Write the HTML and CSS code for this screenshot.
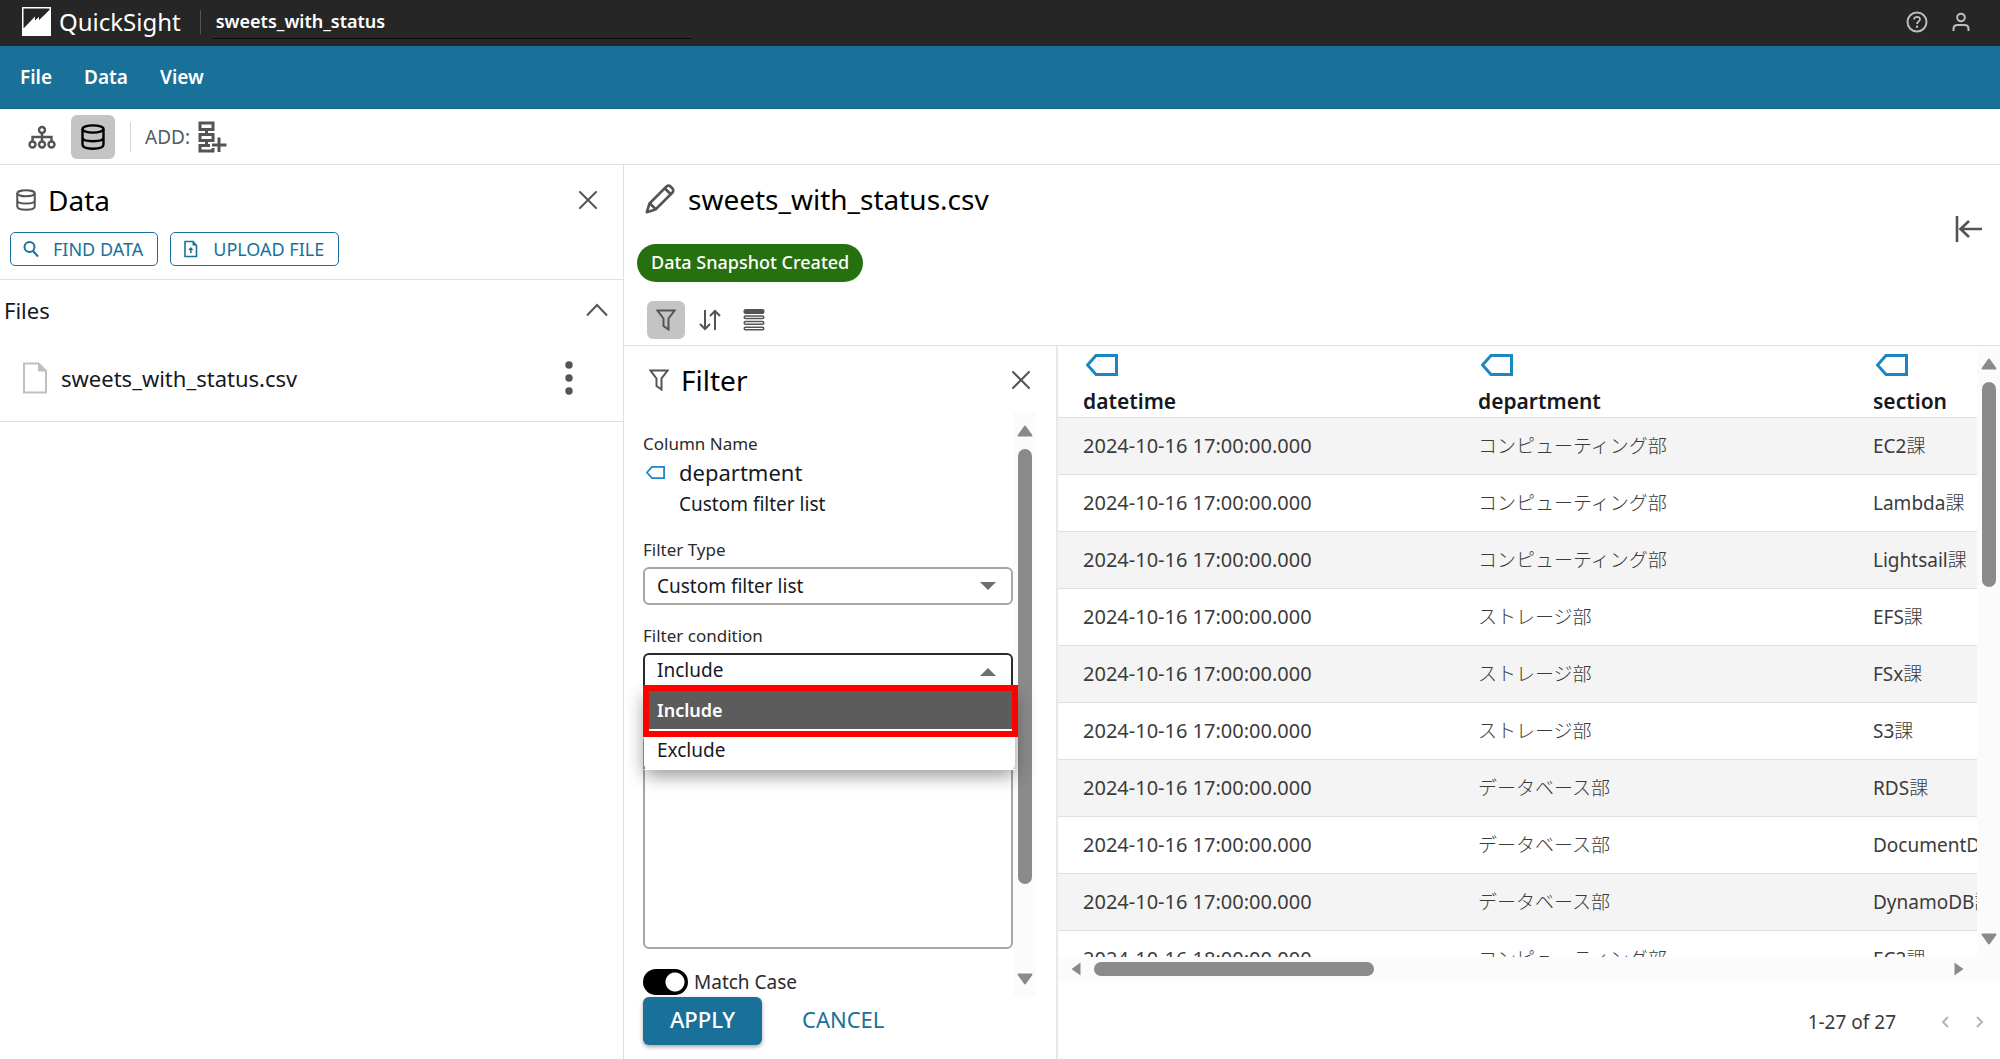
FILE: index.html
```html
<!DOCTYPE html>
<html lang="en">
<head>
<meta charset="utf-8">
<title>QuickSight - sweets_with_status</title>
<meta name="viewport" content="width=device-width, initial-scale=1">
<link rel="stylesheet" href="styles.css">
</head>
<body>
<svg class="sprite" aria-hidden="true">
  <symbol id="tag" viewBox="0 0 32 22"><path d="M10 1.5H30.5V20.5H10L1.5 11Z" fill="none" stroke="currentColor" stroke-width="3"/></symbol>
  <symbol id="close" viewBox="0 0 18 18"><path d="M1 1L17 17M17 1L1 17" fill="none" stroke="currentColor" stroke-width="2" stroke-linecap="round"/></symbol>
  <symbol id="funnel" viewBox="0 0 20 22"><path d="M1.5 1.5H18.5L12.5 9.5V20.5L7.5 17V9.5Z" fill="none" stroke="currentColor" stroke-width="2"/></symbol>
  <symbol id="database" viewBox="0 0 24 26"><g fill="none" stroke="currentColor" stroke-width="2.4"><ellipse cx="12" cy="5" rx="10.5" ry="3.600"/><path d="M1.500 5V20.500C1.500 23.500 6 24.700 12 24.700S22.500 23.500 22.500 20.500V5M1.500 13.500C1.500 16 6 17.200 12 17.200S22.500 16 22.500 13.500"/></g></symbol>
  <symbol id="arrow" viewBox="0 0 16 12"><path d="M8 1.500L14.500 10.500H1.500Z" fill="currentColor" stroke="currentColor" stroke-width="2" stroke-linejoin="round"/></symbol>
</svg>

<header class="topbar">
  <div class="brand">
    <svg width="29" height="29" viewBox="0 0 29 29" aria-hidden="true"><rect width="29" height="29" fill="#fff"/><path d="M1.500 1.500H27.500V3L17 14.500V10L1.500 23Z" fill="#262626"/><path d="M2 21L13 9.500V17L27.500 3V10L29 8V29H0V21Z" fill="#fff"/></svg>
    <span>QuickSight</span>
  </div>
  <input class="doc-name" type="text" aria-label="Name" value="sweets_with_status">
  <button class="bare" aria-label="Help"><svg width="22" height="22" viewBox="0 0 22 22"><circle cx="11" cy="11" r="9.500" fill="none" stroke="#bdbdbd" stroke-width="2"/><path d="M8 8.500C8 4.900 14.200 5 14 8.500C13.900 10.600 11 10.300 11 13" fill="none" stroke="#bdbdbd" stroke-width="1.800"/><circle cx="11" cy="15.800" r="1.200" fill="#bdbdbd"/></svg></button>
  <button class="bare" aria-label="Account"><svg width="18" height="20" viewBox="0 0 18 20"><g fill="none" stroke="#bdbdbd" stroke-width="2"><circle cx="9" cy="5.500" r="3.800"/><path d="M1.500 19V17C1.500 14 3 13 5.500 13H12.500C15 13 16.500 14 16.500 17V19"/></g></svg></button>
</header>

<nav class="menubar" aria-label="Main menu">
  <a href="#">File</a>
  <a href="#">Data</a>
  <a href="#">View</a>
</nav>

<div class="toolbar">
  <button class="tool" aria-label="Model"><svg width="28" height="24" viewBox="0 0 28 24"><g fill="none" stroke="#545454" stroke-width="2.400"><circle cx="14" cy="5" r="3"/><circle cx="4.500" cy="19.500" r="3"/><circle cx="14" cy="19.500" r="3"/><circle cx="23.500" cy="19.500" r="3"/><path d="M14 8V16.500M4.500 16.500V12H23.500V16.500"/></g></svg></button>
  <button class="tool tool-on" aria-label="Data"><svg width="24" height="26"><use href="#database"/></svg></button>
  <div class="add">
    <span>ADD:</span>
    <button class="bare" aria-label="Add step"><svg width="29" height="32" viewBox="0 0 29 32"><g fill="none" stroke="#545454" stroke-width="3"><path d="M2 2H15V8.500H2ZM2 13.500H15V19.500H2ZM8.500 8.500V13.500M8.500 19.500V24.500M12 24.500H2V30H15V27"/><path d="M21 16.500V31M14 24H28.500"/></g></svg></button>
  </div>
</div>

<main class="workspace">
  <aside class="side">
    <div class="side-head">
      <svg class="ink" width="20" height="22"><use href="#database"/></svg>
      <h2>Data</h2>
      <button class="bare ink" aria-label="Close data panel"><svg width="18" height="18"><use href="#close"/></svg></button>
    </div>
    <div class="side-actions">
      <button class="outline"><svg width="16" height="18" viewBox="0 0 16 18"><g fill="none" stroke="currentColor" stroke-width="2"><circle cx="6.500" cy="7" r="5"/><path d="M10 11L15 16.500"/></g></svg>FIND DATA</button>
      <button class="outline"><svg width="16" height="18" viewBox="0 0 16 18"><path d="M2 1.500H10L13.500 5.500V16.500H2Z" fill="none" stroke="currentColor" stroke-width="1.600"/><path d="M9.500 1V5.500H14Z" fill="currentColor"/><path d="M7.800 7L10.500 10H8.600V13H7V10H5.100Z" fill="currentColor"/></svg>UPLOAD FILE</button>
    </div>
    <div class="files-head">
      <h3>Files</h3>
      <button class="bare ink" aria-label="Collapse files"><svg width="22" height="14" viewBox="0 0 22 14"><path d="M1 12.500L11 2L21 12.500" fill="none" stroke="currentColor" stroke-width="2"/></svg></button>
    </div>
    <div class="file">
      <svg width="26" height="32" viewBox="0 0 26 32"><path d="M2 1.500H16.500L24 9V30.500H2Z" fill="#fff" stroke="#bfbfbf" stroke-width="2"/><path d="M16 1V9.500H24.500Z" fill="#bfbfbf"/></svg>
      <span>sweets_with_status.csv</span>
      <button class="bare ink" aria-label="File options"><svg width="8" height="34" viewBox="0 0 8 34"><g fill="currentColor"><circle cx="4" cy="4" r="3.700"/><circle cx="4" cy="17" r="3.700"/><circle cx="4" cy="30" r="3.700"/></g></svg></button>
    </div>
  </aside>

  <section class="content">
    <div class="content-head">
      <div>
        <div class="title">
          <svg width="30" height="30" viewBox="0 0 30 30"><g fill="none" stroke="#545454" stroke-width="2.600" stroke-linejoin="round"><path d="M1.800 28.200L4.500 19.500L21.500 2.500Q23.500 .900 25.500 2.500L27.500 4.500Q29 6.500 27.500 8.500L10.500 25.500Z"/><path d="M5 19.500L10.500 25"/><path d="M20 4.500L25.500 10"/></g></svg>
          <h1>sweets_with_status.csv</h1>
        </div>
        <span class="pill">Data Snapshot Created</span>
      </div>
      <button class="bare ink" aria-label="Collapse"><svg width="28" height="26" viewBox="0 0 28 26"><path d="M2 0V26M27 13H5M14 5L5.500 13L14 21" fill="none" stroke="currentColor" stroke-width="2.600"/></svg></button>
    </div>
    <div class="data-tools">
      <button class="square square-on" aria-label="Filter"><svg width="20" height="22"><use href="#funnel"/></svg></button>
      <button class="square" aria-label="Sort"><svg width="22" height="22" viewBox="0 0 22 22"><path d="M6 1V20M1 15L6 20L11 15M16 21V2M11 7L16 2L21 7" fill="none" stroke="currentColor" stroke-width="2"/></svg></button>
      <button class="square" aria-label="Rows"><svg width="22" height="22" viewBox="0 0 22 22"><rect x=".500" y="0" width="21" height="5" rx="2" fill="currentColor"/><g fill="none" stroke="currentColor" stroke-width="1.500"><rect x="1.200" y="7" width="19.600" height="2.600" rx="1.300"/><rect x="1.200" y="12.600" width="19.600" height="2.600" rx="1.300"/><rect x="1.200" y="18.200" width="19.600" height="2.600" rx="1.300"/></g></svg></button>
    </div>

    <div class="split">
      <form class="filter">
        <div class="filter-head">
          <svg class="ink" width="20" height="22"><use href="#funnel"/></svg>
          <h2>Filter</h2>
          <button type="button" class="bare ink" aria-label="Close filter panel"><svg width="18" height="18"><use href="#close"/></svg></button>
        </div>
        <div class="filter-scroll">
          <div class="fields">
            <div class="caption">Column Name</div>
            <div class="column-name"><svg width="19" height="13"><use href="#tag"/></svg><span>department</span></div>
            <div class="column-note">Custom filter list</div>
            <label class="caption" for="type">Filter Type</label>
            <div class="picker">
              <select id="type"><option>Custom filter list</option></select>
              <svg width="16" height="8" viewBox="0 0 16 8"><path d="M0 0H16L8 8Z" fill="#6e6e6e"/></svg>
            </div>
            <label class="caption" for="condition">Filter condition</label>
            <div class="picker picker-open">
              <select id="condition"><option>Include</option><option>Exclude</option></select>
              <svg width="16" height="8" viewBox="0 0 16 8"><path d="M0 8H16L8 0Z" fill="#6e6e6e"/></svg>
              <ul class="options" role="listbox" aria-label="Filter condition">
                <li class="picked" role="option" aria-selected="true">Include</li>
                <li role="option" aria-selected="false">Exclude</li>
              </ul>
              <div class="highlight"></div>
            </div>
            <textarea aria-label="Filter values"></textarea>
            <label class="switch"><input type="checkbox" checked>Match Case</label>
          </div>
          <div class="vbar" aria-hidden="true">
            <svg width="16" height="12"><use href="#arrow"/></svg>
            <div class="rail"><div class="thumb" style="height:85%"></div></div>
            <svg class="down" width="16" height="12"><use href="#arrow"/></svg>
          </div>
        </div>
        <div class="filter-actions">
          <button type="submit" class="apply">APPLY</button>
          <button type="button" class="cancel">CANCEL</button>
        </div>
      </form>

      <div class="grid">
        <div class="grid-view">
          <table>
            <thead>
              <tr>
                <th scope="col"><svg width="32" height="22"><use href="#tag"/></svg>datetime</th>
                <th scope="col"><svg width="32" height="22"><use href="#tag"/></svg>department</th>
                <th scope="col"><svg width="32" height="22"><use href="#tag"/></svg>section</th>
              </tr>
            </thead>
            <tbody>
              <tr><td>2024-10-16 17:00:00.000</td><td lang="ja">コンピューティング部</td><td lang="ja">EC2<span>課</span></td></tr>
              <tr><td>2024-10-16 17:00:00.000</td><td lang="ja">コンピューティング部</td><td lang="ja">Lambda<span>課</span></td></tr>
              <tr><td>2024-10-16 17:00:00.000</td><td lang="ja">コンピューティング部</td><td lang="ja">Lightsail<span>課</span></td></tr>
              <tr><td>2024-10-16 17:00:00.000</td><td lang="ja">ストレージ部</td><td lang="ja">EFS<span>課</span></td></tr>
              <tr><td>2024-10-16 17:00:00.000</td><td lang="ja">ストレージ部</td><td lang="ja">FSx<span>課</span></td></tr>
              <tr><td>2024-10-16 17:00:00.000</td><td lang="ja">ストレージ部</td><td lang="ja">S3<span>課</span></td></tr>
              <tr><td>2024-10-16 17:00:00.000</td><td lang="ja">データベース部</td><td lang="ja">RDS<span>課</span></td></tr>
              <tr><td>2024-10-16 17:00:00.000</td><td lang="ja">データベース部</td><td lang="ja">DocumentDB<span>課</span></td></tr>
              <tr><td>2024-10-16 17:00:00.000</td><td lang="ja">データベース部</td><td lang="ja">DynamoDB<span>課</span></td></tr>
              <tr><td>2024-10-16 18:00:00.000</td><td lang="ja">コンピューティング部</td><td lang="ja">EC2<span>課</span></td></tr>
            </tbody>
          </table>
        </div>
        <div class="vbar" aria-hidden="true">
          <svg width="16" height="12"><use href="#arrow"/></svg>
          <div class="rail"><div class="thumb" style="height:38%"></div></div>
          <svg class="down" width="16" height="12"><use href="#arrow"/></svg>
        </div>
        <div class="hbar" aria-hidden="true">
          <svg width="12" height="16" viewBox="0 0 12 16"><path d="M1.500 8L10.500 1.500V14.500Z"/></svg>
          <div class="rail"><div class="thumb" style="width:33%"></div></div>
          <svg width="12" height="16" viewBox="0 0 12 16"><path d="M10.500 8L1.500 1.500V14.500Z"/></svg>
        </div>
        <div class="pager">
          <span>1-27 of 27</span>
          <button class="bare" disabled aria-label="Previous page"><svg width="8" height="12" viewBox="0 0 8 12"><path d="M7 1L2 6L7 11" fill="none" stroke="#b5b5b5" stroke-width="2"/></svg></button>
          <button class="bare" disabled aria-label="Next page"><svg width="8" height="12" viewBox="0 0 8 12"><path d="M1 1L6 6L1 11" fill="none" stroke="#b5b5b5" stroke-width="2"/></svg></button>
        </div>
      </div>
    </div>
  </section>
</main>
</body>
</html>
```

FILE: styles.css
```css
* { box-sizing: border-box; }

body {
  margin: 0;
  height: 100vh;
  display: flex;
  flex-direction: column;
  overflow: hidden;
  background: #fff;
  color: #16191f;
  font-family: "Noto Sans", "Noto Sans CJK JP", sans-serif;
  font-size: 19px;
  line-height: 28px;
}

h1, h2, h3, ul { margin: 0; padding: 0; }
h1, h2, h3 { font-weight: 400; }
h1, h2 { font-size: 28px; line-height: 36px; color: #000; }
button, input, select, textarea { font: inherit; color: inherit; }
button { cursor: pointer; }
svg { display: block; flex: none; }
.sprite { position: absolute; width: 0; height: 0; }

.bare { display: flex; padding: 0; border: 0; background: none; }
.ink { color: #545454; }

/* Top bars */
.topbar {
  flex: none;
  display: flex;
  align-items: center;
  height: 46px;
  padding: 0 30px 3px 22px;
  gap: 24px;
  background: #262626;
  color: #fff;
}
.brand {
  display: flex;
  align-items: center;
  gap: 8px;
  height: 24px;
  padding-right: 19px;
  margin-right: -13px;
  border-right: 1px solid #545454;
  font-size: 24px;
}
.doc-name {
  width: 480px;
  height: 34px;
  margin-right: auto;
  padding: 0 4px;
  border: 0;
  border-bottom: 1px solid #0d0d0d;
  background: none;
  font-size: 18px;
  font-weight: 600;
}

.menubar {
  flex: none;
  display: flex;
  align-items: center;
  gap: 32px;
  height: 63px;
  padding: 0 20px;
  background: #19719a;
  border-bottom: 1px solid #0f6491;
}
.menubar a { color: #fff; font-weight: 600; text-decoration: none; }

.toolbar {
  flex: none;
  display: flex;
  align-items: center;
  height: 56px;
  padding-left: 20px;
  gap: 7px;
  border-bottom: 1px solid #e0e0e0;
}
.tool {
  display: grid;
  place-items: center;
  width: 44px;
  height: 44px;
  padding: 0;
  border: 0;
  border-radius: 6px;
  background: none;
}
.tool-on { background: #c4c4c4; color: #000; }
.add {
  display: flex;
  align-items: center;
  gap: 8px;
  height: 30px;
  margin-left: 8px;
  padding-left: 14px;
  border-left: 1px solid #d5d5d5;
  color: #545b64;
}

.workspace { flex: 1; min-height: 0; display: flex; }

/* Data panel */
.side { flex: none; width: 31.2%; border-right: 1px solid #e0e0e0; }
.side-head {
  display: flex;
  align-items: center;
  gap: 12px;
  padding: 17px 26px 14px 16px;
}
.side-head h2, .files-head h3, .file span, .filter-head h2 { flex: 1; }
.side-actions {
  display: flex;
  gap: 12px;
  padding: 0 10px 13px;
  border-bottom: 1px solid #e0e0e0;
}
.outline {
  display: flex;
  align-items: center;
  gap: 14px;
  height: 34px;
  padding: 0 14px 0 12px;
  border: 1px solid #19719a;
  border-radius: 5px;
  background: #fff;
  color: #19719a;
  font-size: 18px;
}
.files-head {
  display: flex;
  align-items: center;
  padding: 16px 15px 14px 4px;
}
.files-head h3 { font-size: 22px; }
.file {
  display: flex;
  align-items: center;
  gap: 13px;
  height: 84px;
  padding: 0 50px 3px 22px;
  border-bottom: 1px solid #e0e0e0;
  font-size: 22px;
}

/* Dataset */
.content { flex: 1; min-width: 0; display: flex; flex-direction: column; }
.content-head {
  display: flex;
  align-items: center;
  justify-content: space-between;
  padding: 16px 17px 19px 13px;
}
.content-head > .bare { padding-bottom: 5px; }
.title { display: flex; align-items: center; gap: 13px; padding-left: 8px; }
.pill {
  display: block;
  width: fit-content;
  margin-top: 27px;
  padding: 4px 14px 6px;
  border-radius: 19px;
  background: #26700f;
  color: #fff;
  font-size: 18px;
  font-weight: 500;
}
.data-tools { display: flex; gap: 6px; padding: 0 23px 6px; }
.square {
  display: grid;
  place-items: center;
  width: 38px;
  height: 38px;
  padding: 0;
  border: 0;
  border-radius: 6px;
  background: none;
  color: #545454;
}
.square-on { background: #c4c4c4; }

.split { flex: 1; min-height: 0; display: flex; border-top: 1px solid #e0e0e0; }

/* Filter form */
.filter {
  flex: none;
  width: 434px;
  display: flex;
  flex-direction: column;
  border-right: 2px solid #e8e8e8;
}
.filter-head {
  display: flex;
  align-items: center;
  gap: 12px;
  padding: 16px 26px 15px 25px;
}
.filter-scroll { flex: 1; min-height: 0; display: flex; padding-left: 19px; }
.fields { width: 370px; display: flex; flex-direction: column; padding-top: 17px; }
.caption { font-size: 17px; color: #2b2b2b; }
.column-name {
  display: flex;
  align-items: center;
  gap: 14px;
  padding-left: 3px;
  font-size: 22px;
}
.column-name svg, th svg { color: #1a87c2; }
.column-note { padding: 4px 0 18px 36px; }
.picker { position: relative; margin: 3px 0 17px; }
.picker select {
  display: block;
  width: 100%;
  height: 38px;
  padding: 0 12px;
  border: 2px solid #a6a6a6;
  border-radius: 6px;
  background: #fff;
  appearance: none;
}
.picker > svg { position: absolute; right: 17px; top: 15px; }
.picker-open { margin-bottom: 44px; }
.picker-open select { border-color: #2b2b2b; padding-bottom: 4px; }
.options {
  position: absolute;
  z-index: 1;
  inset: 37px -2px auto 1px;
  list-style: none;
  background: #fff;
  border-radius: 0 0 6px 6px;
  box-shadow: 0 6px 18px rgba(0, 0, 0, .4);
}
.options li { height: 40px; padding: 6px 13px; border-bottom: 1px solid #fff; }
.options .picked { background: #5c5c5c; color: #fff; font-size: 18px; font-weight: 600; }
.highlight {
  position: absolute;
  z-index: 2;
  inset: 32px -5px auto 0;
  height: 52px;
  border: 6px solid #f00;
}
textarea {
  flex: 1;
  min-height: 60px;
  border: 2px solid #a6a6a6;
  border-radius: 6px;
  resize: none;
}
.switch {
  flex: none;
  display: flex;
  align-items: center;
  gap: 6px;
  margin: 19px 0 1px;
  color: #2b2b2b;
}
.switch input {
  appearance: none;
  width: 45px;
  height: 26px;
  margin: 0;
  border-radius: 13px;
  background: radial-gradient(circle at 32px 13px, #fff 9px, #000 10px);
}
.filter-actions { display: flex; gap: 40px; padding: 0 19px 14px; }
.filter-actions button { height: 48px; padding: 0 0 4px; border: 0; font-size: 22px; }
.filter-actions .apply {
  width: 119px;
  border-radius: 6px;
  background: #19719a;
  color: #fff;
  font-weight: 500;
  box-shadow: 0 2px 4px rgba(0, 0, 0, .35);
}
.cancel { background: none; color: #19719a; }

/* Scroll bars */
.vbar, .hbar { display: flex; align-items: center; background: #fbfbfb; color: #8a8a8a; }
.vbar { flex-direction: column; width: 23px; padding: 12px 0; gap: 12px; }
.hbar { height: 24px; padding: 0 12px; gap: 12px; fill: #8a8a8a; }
.rail { flex: 1; min-width: 0; min-height: 0; }
.vbar .rail { width: 14px; }
.hbar .rail { height: 14px; }
.thumb { width: 100%; height: 100%; border-radius: 7px; background: #8a8a8a; }
.down { transform: rotate(180deg); }

/* Table */
.grid {
  flex: 1;
  min-width: 0;
  display: grid;
  grid-template: minmax(0, 1fr) 24px 78px / minmax(0, 1fr) 23px;
}
.grid-view { overflow: hidden; }
.hbar, .pager { grid-column: 1 / -1; }
.hbar { padding-right: 35px; }
table { border-collapse: separate; border-spacing: 0; table-layout: fixed; width: 1185px; }
th, td { padding: 0 0 0 25px; border-bottom: 1px solid #e0e0e0; text-align: left; white-space: nowrap; }
th { height: 72px; font-size: 21px; font-weight: 600; }
th svg { margin: 6px 0 11px 3px; }
td { height: 57px; font-size: 20px; color: #3b3b3b; }
td:lang(ja) { font-size: 19px; }
td:nth-child(2), td span { font-weight: 300; }
tbody tr:nth-child(odd) { background: #f4f4f4; }
.pager {
  display: flex;
  align-items: center;
  justify-content: flex-end;
  gap: 27px;
  padding: 4px 16px 0 0;
  color: #3b3b3b;
}
.pager span { margin-right: 18px; }
```
